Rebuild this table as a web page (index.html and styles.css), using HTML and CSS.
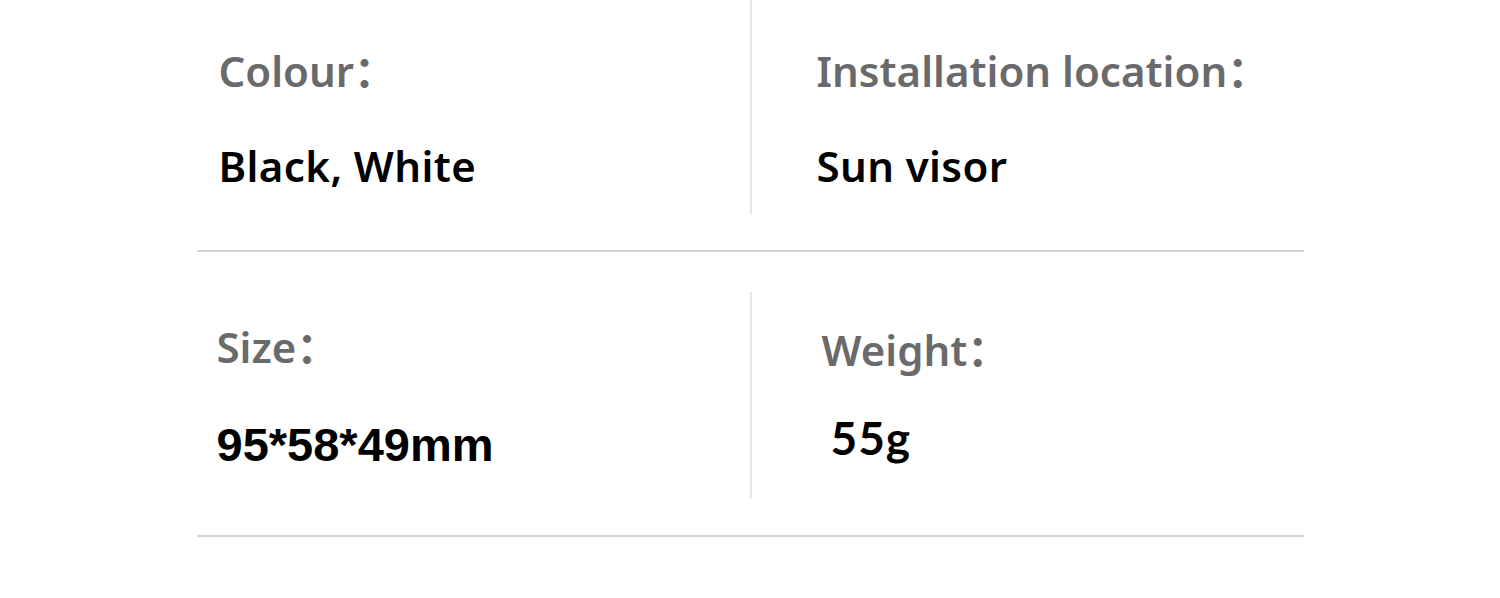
FILE: index.html
```html
<!DOCTYPE html>
<html lang="en">
<head>
<meta charset="utf-8">
<link rel="stylesheet" href="styles.css">
<title>Specs</title>
</head>
<body>
<div class="specs">
  <div class="row row-1">
    <div class="cell cell-left">
      <div class="label">Colour：</div>
      <div class="value">Black, White</div>
    </div>
    <div class="divider div-1"></div>
    <div class="cell cell-right">
      <div class="label">Installation location：</div>
      <div class="value">Sun visor</div>
    </div>
  </div>
  <div class="row row-2">
    <div class="cell cell-left c-size">
      <div class="label">Size：</div>
      <div class="value v-size">95*58*49mm</div>
    </div>
    <div class="divider div-2"></div>
    <div class="cell cell-right c-weight">
      <div class="label">Weight：</div>
      <div class="value v-weight">55g</div>
    </div>
  </div>
</div>
</body>
</html>
```

FILE: styles.css
```css
html, body {
  margin: 0;
  padding: 0;
  background: #ffffff;
}
body {
  width: 1500px;
  height: 598px;
  overflow: hidden;
}
.specs {
  width: 1107px;
  margin: 0 auto;
}
.row {
  display: flex;
  align-items: flex-start;
  border-bottom: 2px solid #d2d2d2;
}
.row-1 {
  height: 250px;
}
.row-2 {
  height: 283px;
}
.cell {
  box-sizing: border-box;
}
.cell-left {
  width: 553px;
  padding-left: 22px;
  padding-top: 47px;
}
.cell-right {
  flex: 1;
  padding-left: 65px;
  padding-top: 47px;
}
.divider {
  width: 2px;
  background: #e6e6e6;
}
.div-1 {
  height: 215px;
}
.div-2 {
  margin-top: 40px;
  height: 207px;
}
.label {
  font-family: "Noto Sans", "Noto Sans CJK SC", sans-serif;
  font-weight: 600;
  font-size: 42px;
  line-height: 48px;
  color: #6a6a6a;
}
.value {
  font-family: "Noto Sans", "Noto Sans CJK SC", sans-serif;
  font-weight: 600;
  font-size: 42px;
  line-height: 48px;
  color: #000000;
  margin-top: 47px;
  letter-spacing: 0.4px;
}
.c-size {
  padding-top: 71px;
  padding-left: 20px;
}
.c-weight {
  padding-top: 74px;
  padding-left: 70px;
}
.v-size {
  font-family: "Liberation Sans", Arial, sans-serif;
  font-weight: 700;
  font-size: 47px;
  line-height: 56px;
  margin-top: 46px;
  letter-spacing: 0;
}
.v-weight {
  font-family: Lato, "Liberation Sans", sans-serif;
  font-weight: 700;
  font-size: 46px;
  line-height: 56px;
  padding-left: 9px;
  margin-top: 36px;
  letter-spacing: 1px;
}
```
